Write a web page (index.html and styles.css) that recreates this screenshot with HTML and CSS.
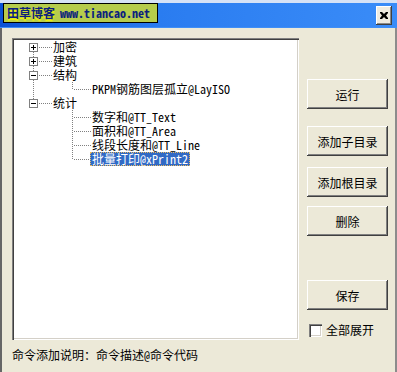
FILE: index.html
```html
<!DOCTYPE html>
<html lang="zh">
  <head>
    <meta charset="UTF-8" />
    <title>田草博客 命令目录</title>
    <link rel="stylesheet" href="styles.css">
  </head>
  <body>
    <div class="window">
      <div class="titlebar">
        <div class="logo">
          <span class="logo-cn">田草博客</span>
          <span class="logo-url">www.tiancao.net</span>
        </div>
        <button class="close" type="button">
          <svg width="8" height="7" viewBox="0 0 8 7">
            <path d="M0 0h2l2 2 2-2h2v1L6 3.5 8 6v1H6L4 5 2 7H0V6l2-2.5L0 1z" fill="#000" />
          </svg>
        </button>
      </div>

      <div class="client">
        <div class="main">
          <!-- Command tree -->
          <div class="tree">
            <div class="row">
              <span class="cell first"><span class="exp plus"></span></span>
              <span class="label">加密</span>
            </div>
            <div class="row">
              <span class="cell tee"><span class="exp plus"></span></span>
              <span class="label">建筑</span>
            </div>
            <div class="row">
              <span class="cell tee"><span class="exp"></span></span>
              <span class="label">结构</span>
            </div>
            <div class="row">
              <span class="cell pipe"></span>
              <span class="cell elbow"></span>
              <span class="label">PKPM钢筋图层孤立@LayISO</span>
            </div>
            <div class="row">
              <span class="cell elbow"><span class="exp"></span></span>
              <span class="label">统计</span>
            </div>
            <div class="row">
              <span class="cell"></span>
              <span class="cell tee"></span>
              <span class="label">数字和@TT_Text</span>
            </div>
            <div class="row">
              <span class="cell"></span>
              <span class="cell tee"></span>
              <span class="label">面积和@TT_Area</span>
            </div>
            <div class="row">
              <span class="cell"></span>
              <span class="cell tee"></span>
              <span class="label">线段长度和@TT_Line</span>
            </div>
            <div class="row">
              <span class="cell"></span>
              <span class="cell elbow"></span>
              <span class="label selected">批量打印@xPrint2</span>
            </div>
          </div>

          <div class="side">
            <button class="btn" type="button">运行</button>
            <button class="btn gap-sub" type="button">添加子目录</button>
            <button class="btn gap-root" type="button">添加根目录</button>
            <button class="btn gap-del" type="button">删除</button>
            <button class="btn gap-save" type="button">保存</button>
            <label class="check">
              <span class="box"></span>
              全部展开
            </label>
          </div>
        </div>

        <div class="hint">命令添加说明：命令描述@命令代码</div>
      </div>
    </div>
  </body>
</html>
```

FILE: styles.css
```css
/* General */
* {
  box-sizing: border-box;
}

body {
  margin: 0;
  font-family: "Noto Sans Mono CJK SC", "Noto Sans CJK SC",
    sans-serif;
  font-size: 12px;
  color: #000;
}

.window {
  width: 397px;
  height: 372px;
  background: #ece9d8;
  overflow: hidden;
}

/* Title bar */
.titlebar {
  height: 28px;
  display: flex;
  align-items: flex-start;
  padding: 3px 5px 0 3px;
  background: linear-gradient(#d6e2f6 0 3px, transparent 3px),
    linear-gradient(#3f8ef6 0 1px, transparent 1px) 0 27px / 100% 1px no-repeat,
    linear-gradient(to right, #0a52d6, #2a7cf0 40%, #3a8cf8);
}

.logo {
  width: 155px;
  height: 20px;
  display: flex;
  align-items: center;
  gap: 5px;
  padding-left: 3px;
  border: 1px solid #000;
  background: #b6cc4c;
  color: #0c1f7e;
  font-weight: bold;
  line-height: 14px;
}

.logo-cn {
  text-shadow: 0 2px 1px #f4f400;
}

.close {
  width: 16px;
  height: 19px;
  margin: 3px 0 0 auto;
  padding: 0;
  border: none;
  background: #efebe0;
  box-shadow: inset -1px -1px #404040, inset 1px 1px #fff,
    inset -2px -2px #8a8a8a;
  display: flex;
  align-items: center;
  justify-content: center;
}

/* Client area */
.client {
  height: 344px;
  padding: 10px 0 0 10px;
  border-left: 2px solid #666;
  border-right: 2px solid #8c8c8c;
}

.main {
  display: flex;
  gap: 8px;
}

/* Tree view */
.tree {
  width: 287px;
  height: 302px;
  padding: 2px;
  background: #fff;
  box-shadow: inset 1px 1px #808080, inset 2px 2px #404040,
    inset -1px -1px #fff, inset -2px -2px #d4d0c8;
}

.row {
  display: flex;
  height: 14px;
  line-height: 14px;
  white-space: nowrap;
}

.cell {
  flex: none;
  width: 39px;
  height: 14px;
  background-repeat: no-repeat;
}

.pipe {
  background-image: repeating-linear-gradient(#808080 0 1px, transparent 1px 2px);
  background-size: 1px 14px;
  background-position: 19px 0;
}

.tee,
.first,
.elbow {
  background-image: repeating-linear-gradient(#808080 0 1px, transparent 1px 2px),
    repeating-linear-gradient(to right, #808080 0 1px, transparent 1px 2px);
  background-position: 19px 0, 21px 7px;
  background-size: 1px 14px, 17px 1px;
}

.first {
  background-position: 19px 8px, 21px 7px;
  background-size: 1px 6px, 17px 1px;
}

.elbow {
  background-size: 1px 8px, 17px 1px;
}

.exp {
  display: block;
  width: 9px;
  height: 9px;
  margin: 3px 0 0 15px;
  border: 1px solid #808080;
  background: linear-gradient(#000, #000) 1px 3px / 5px 1px no-repeat,
    #fff;
}

.exp.plus {
  background: linear-gradient(#000, #000) 1px 3px / 5px 1px no-repeat,
    linear-gradient(#000, #000) 3px 1px / 1px 5px no-repeat, #fff;
}

.label {
  height: 14px;
  margin-left: -2px;
  padding: 0 2px;
}

.label.selected {
  background: #316ac5;
  color: #fff;
  outline: 1px dotted #e8b860;
  outline-offset: -1px;
}

/* Buttons column */
.side {
  width: 81px;
  display: flex;
  flex-direction: column;
  padding-top: 41px;
}

.btn {
  height: 30px;
  padding: 0;
  border: none;
  background: #ece9d8;
  font: inherit;
  color: #000;
  box-shadow: inset -1px -1px #404040, inset 1px 1px #fff,
    inset -2px -2px #808080;
}

.gap-sub {
  margin-top: 17px;
}

.gap-root {
  margin-top: 11px;
}

.gap-del {
  margin-top: 9px;
}

.gap-save {
  margin-top: 44px;
}

.check {
  display: flex;
  align-items: center;
  gap: 4px;
  margin: 13px 0 0 2px;
  line-height: 14px;
}

.box {
  width: 13px;
  height: 13px;
  background: #fff;
  box-shadow: inset 1px 1px #808080, inset 2px 2px #404040,
    inset -1px -1px #fff, inset -2px -2px #d4d0c8;
}

.hint {
  margin-top: 8px;
  line-height: 14px;
}
```
